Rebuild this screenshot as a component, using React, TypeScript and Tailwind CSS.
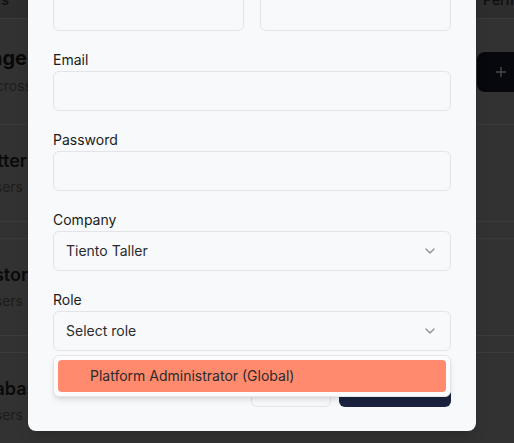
import React from 'react';
import { ChevronDown, Plus } from 'lucide-react';

// Dimmed page behind the dialog: only the outer strips are visible
const PageRow: React.FC<{ left?: React.ReactNode; right?: React.ReactNode; className?: string }> = ({ left, right, className }) => (
  <div className={`flex ${className ?? ''}`}>
    <div className="flex w-[28px] shrink-0 justify-end overflow-hidden">{left}</div>
    <div className="flex-1" />
    <div className="flex w-[38px] shrink-0 overflow-hidden">{right}</div>
  </div>
);

const Card: React.FC<{ title: string; sub: string; shift: string }> = ({ title, sub, shift }) => (
  <PageRow
    className="border-y border-[#3b3b3b] py-[22px]"
    left={
      <div className="flex flex-col items-end whitespace-nowrap">
        <span className={`text-lg leading-7 font-semibold text-[#0a0a0a] ${shift}`}>{title}</span>
        <span className="pr-[5px] text-sm leading-6 text-[#1c1c1c]">{sub}</span>
      </div>
    }
  />
);

const Field: React.FC<{ label: string; children?: React.ReactNode; className?: string }> = ({ label, children, className }) => (
  <div className={`relative flex flex-col gap-px ${className ?? ''}`}>
    <label className="text-sm leading-5 text-[#1a1c20]">{label}</label>
    {children ?? <div className="h-10 w-full rounded-md border border-[#e2e4e9]" />}
  </div>
);

const SelectBox: React.FC<{ value: string }> = ({ value }) => (
  <div className="flex h-10 w-full items-center justify-between rounded-md border border-[#e2e4e9] px-3 text-sm text-[#2a2b2e]">
    <span>{value}</span>
    <ChevronDown className="h-4 w-4 opacity-50" />
  </div>
);

export default function App() {
  return (
    <div className="relative h-[443px] w-[514px] overflow-hidden bg-[#323232] font-['Inter',sans-serif]">
      <div className="flex flex-col">
        <PageRow
          className="h-[19px] border-b border-[#3b3b3b] bg-[#2d2d2d]"
          left={<span className="-mt-[10px] pr-[19px] text-sm leading-5 font-medium text-[#0d0d0d]">Users</span>}
          right={<span className="-mt-[10px] pl-[7px] text-sm leading-5 font-medium whitespace-nowrap text-[#0d0d0d]">Permissions</span>}
        />
        <PageRow
          className="h-[105px] items-center"
          left={
            <div className="-mt-[4px] flex flex-col items-end whitespace-nowrap">
              <span className="mr-[1px] text-xl leading-8 font-bold text-[#080808]">Exchange</span>
              <span className="-mr-[4px] text-sm leading-6 text-[#1c1c1c]">across</span>
            </div>
          }
          right={
            <div className="ml-px flex h-10 items-center gap-2 rounded-lg bg-[#06080e] px-4 text-sm font-medium whitespace-nowrap text-[#4a4a4a]">
              <Plus className="h-4 w-4 shrink-0" />
              Add User
            </div>
          }
        />
        <div className="flex flex-col gap-4">
          <Card title="Twitter" sub="12 users" shift="mr-[1px]" />
          <Card title="History" sub="8 users" shift="-mr-[11px]" />
          <Card title="Database" sub="5 users" shift="-mr-[19px]" />
        </div>
      </div>

      <div className="absolute top-[-54px] left-[28px] w-[448px] rounded-lg bg-[#f8f9fb] px-[25px] py-6 shadow-lg">
        <div className="flex flex-col gap-[19px]">
          <div className="grid grid-cols-2 gap-4">
            <Field label="First name" />
            <Field label="Last name" />
          </div>
          <Field label="Email" />
          <Field label="Password" />
          <Field label="Company">
            <SelectBox value="Tiento Taller" />
          </Field>
          <Field label="Role" className="z-10">
            <SelectBox value="Select role" />
            <div className="absolute top-full right-0 left-0 mt-1 rounded-md border border-[#e4e6ea] bg-[#fbfbfc] p-1 shadow-md">
              <div className="flex h-8 items-center rounded-sm bg-[#ff8a6d] pr-2 pl-8 text-sm text-[#2b2b2b]">
                Platform Administrator (Global)
              </div>
            </div>
          </Field>
        </div>
        <div className="mt-4 flex justify-end gap-2">
          <button className="h-10 rounded-md border border-[#e2e4e9] px-4 text-sm font-medium text-[#1f2329]">Cancel</button>
          <button className="h-10 rounded-md bg-[#1b2340] px-4 text-sm font-medium text-white">Create User</button>
        </div>
      </div>
    </div>
  );
}
